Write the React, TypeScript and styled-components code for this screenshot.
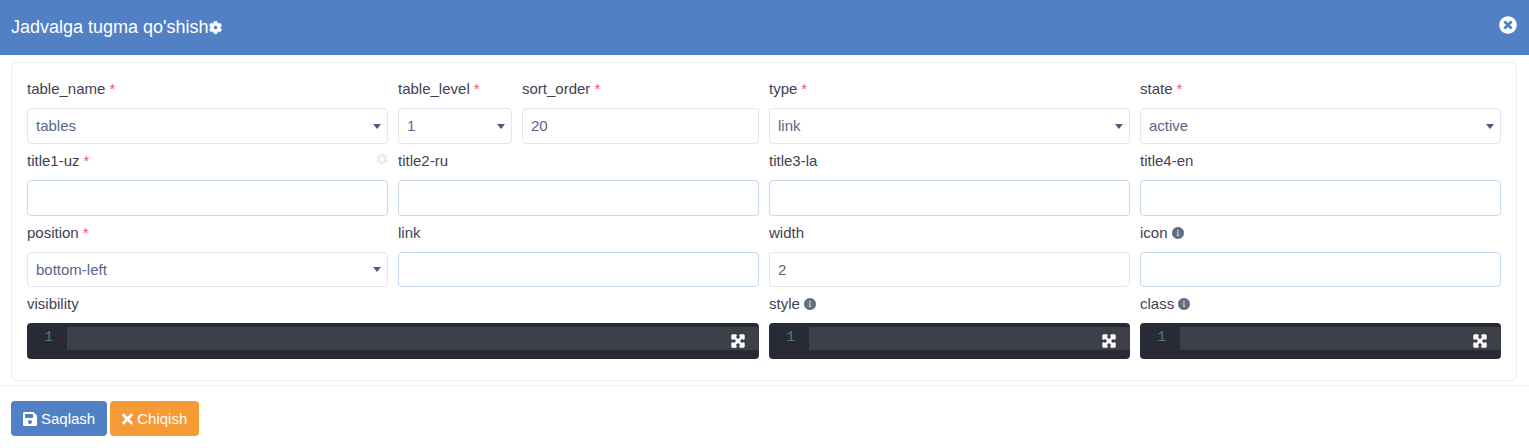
import React from "react";
import styled, { createGlobalStyle } from "styled-components";
import { FaCog, FaExpandArrowsAlt, FaInfoCircle, FaSave, FaTimes, FaTimesCircle } from "react-icons/fa";

const GlobalStyle = createGlobalStyle`
  html, body {
    margin: 0;
    background: #fff;
    font-family: "Liberation Sans", Arial, sans-serif;
    font-size: 15px;
    color: #3f4254;
  }
`;

const Header = styled.header`
  height: 55px;
  background: #5280c5;
  color: #fff;
  display: flex;
  align-items: center;
  justify-content: space-between;
  padding: 0 11px;
`;

const Title = styled.h1`
  margin: 0;
  font-size: 18px;
  font-weight: 400;
  display: flex;
  align-items: center;
  svg {
    font-size: 13px;
    margin-top: -1px;
    stroke: currentColor;
    stroke-width: 24;
  }
`;

const Close = styled.button`
  all: unset;
  display: flex;
  font-size: 18px;
  color: #fff;
  margin: -5px 1px 0 0;
`;

const Card = styled.section`
  margin: 7px 12px 0 11px;
  border: 1px solid #ebedf2;
  border-radius: 6px;
  padding: 15px 15px 21px;
  display: grid;
  grid-template-columns: repeat(4, 1fr);
  column-gap: 10px;
  row-gap: 6px;
`;

const Field = styled.div<{ $span?: number; $grow?: number }>`
  position: relative;
  min-width: 0;
  grid-column: span ${(p) => p.$span ?? 1};
  flex: ${(p) => p.$grow ?? "none"} 1 0;
`;

const EditorField = styled(Field)`
  margin-top: -1px;
`;

const SplitField = styled.div`
  display: flex;
  gap: 10px;
`;

const Label = styled.label`
  box-sizing: border-box;
  display: flex;
  align-items: center;
  gap: 4px;
  height: 20px;
  padding-top: 2px;
  margin-bottom: 10px;
  line-height: 18px;
  white-space: nowrap;
  color: #3f4254;
`;

const Required = styled.span`
  color: #f4516c;
`;

const Hint = styled(FaInfoCircle)`
  font-size: 12px;
  color: #5f6f80;
  stroke: currentColor;
  stroke-width: 24;
`;

const Settings = styled(FaCog)`
  position: absolute;
  top: 3px;
  right: 0;
  font-size: 12px;
  color: #e9ecf1;
`;

const Box = styled.div<{ $focused?: boolean; $short?: boolean }>`
  box-sizing: border-box;
  height: ${(p) => (p.$short ? "35px" : "36px")};
  margin-bottom: ${(p) => (p.$short ? "1px" : "0")};
  display: flex;
  align-items: center;
  justify-content: space-between;
  padding: 0 9px 1px 8px;
  background: #fff;
  border: 1px solid ${(p) => (p.$focused ? "#c7d9ec" : "#e2e5ec")};
  border-radius: 4px;
  color: #5b6586;
`;

const Caret = styled.span`
  width: 0;
  height: 0;
  margin: 1px -3px 0 0;
  border-left: 4px solid transparent;
  border-right: 4px solid transparent;
  border-top: 5px solid #4f5a80;
`;

const Editor = styled.div`
  position: relative;
  box-sizing: border-box;
  height: 36px;
  padding: 4px 0 9px;
  display: flex;
  background: #282a36;
  border-radius: 4px;
`;

const Gutter = styled.div`
  width: 40px;
  padding-right: 14px;
  box-sizing: border-box;
  text-align: right;
  font-family: "Liberation Mono", monospace;
  font-size: 14px;
  line-height: 21px;
  color: #4e7f80;
`;

const ActiveLine = styled.div`
  flex: 1;
  background: #3e4049;
`;

const Expand = styled(FaExpandArrowsAlt)`
  position: absolute;
  right: 14px;
  top: 11px;
  width: 14px;
  height: 14px;
  color: #fff;
  stroke: currentColor;
  stroke-width: 40;
`;

const Footer = styled.footer`
  margin-top: 4px;
  border-top: 1px solid #ebedf2;
  padding: 15px 11px 0;
  display: flex;
  gap: 3px;
`;

const Button = styled.button<{ $color: string; $iconWidth: number }>`
  all: unset;
  box-sizing: border-box;
  height: 35px;
  padding: 0 12px;
  display: flex;
  align-items: center;
  gap: 4px;
  color: #fff;
  font-size: 15px;
  border-radius: 4px;
  background: ${(p) => p.$color};
  svg {
    width: ${(p) => p.$iconWidth}px;
    height: 16px;
  }
`;

const Select = ({ value, short }: { value: string; short?: boolean }) => (
  <Box $short={short}>
    {value}
    <Caret />
  </Box>
);

const Name = ({ text, required }: { text: string; required?: boolean }) => (
  <Label>
    {text}
    {required && <Required>*</Required>}
  </Label>
);

const CodeField = ({ name, hint, span }: { name: string; hint?: boolean; span?: number }) => (
  <EditorField $span={span}>
    <Label>
      {name}
      {hint && <Hint />}
    </Label>
    <Editor>
      <Gutter>1</Gutter>
      <ActiveLine />
      <Expand />
    </Editor>
  </EditorField>
);

export default function App() {
  return (
    <>
      <GlobalStyle />
      <Header>
        <Title>
          Jadvalga tugma qo'shish
          <FaCog />
        </Title>
        <Close aria-label="close">
          <FaTimesCircle />
        </Close>
      </Header>
      <Card>
        <Field>
          <Name text="table_name" required />
          <Select value="tables" />
        </Field>
        <SplitField>
          <Field $grow={114}>
            <Name text="table_level" required />
            <Select value="1" />
          </Field>
          <Field $grow={237}>
            <Name text="sort_order" required />
            <Box>20</Box>
          </Field>
        </SplitField>
        <Field>
          <Name text="type" required />
          <Select value="link" />
        </Field>
        <Field>
          <Name text="state" required />
          <Select value="active" />
        </Field>

        <Field>
          <Name text="title1-uz" required />
          <Settings />
          <Box $focused />
        </Field>
        <Field>
          <Name text="title2-ru" />
          <Box $focused />
        </Field>
        <Field>
          <Name text="title3-la" />
          <Box $focused />
        </Field>
        <Field>
          <Name text="title4-en" />
          <Box $focused />
        </Field>

        <Field>
          <Name text="position" required />
          <Select value="bottom-left" short />
        </Field>
        <Field>
          <Name text="link" />
          <Box $focused $short />
        </Field>
        <Field>
          <Name text="width" />
          <Box $short>2</Box>
        </Field>
        <Field>
          <Label>
            icon
            <Hint />
          </Label>
          <Box $focused $short />
        </Field>

        <CodeField name="visibility" span={2} />
        <CodeField name="style" hint />
        <CodeField name="class" hint />
      </Card>
      <Footer>
        <Button $color="#5280c5" $iconWidth={14}>
          <FaSave />
          Saqlash
        </Button>
        <Button $color="#f59a34" $iconWidth={11}>
          <FaTimes />
          Chiqish
        </Button>
      </Footer>
    </>
  );
}
